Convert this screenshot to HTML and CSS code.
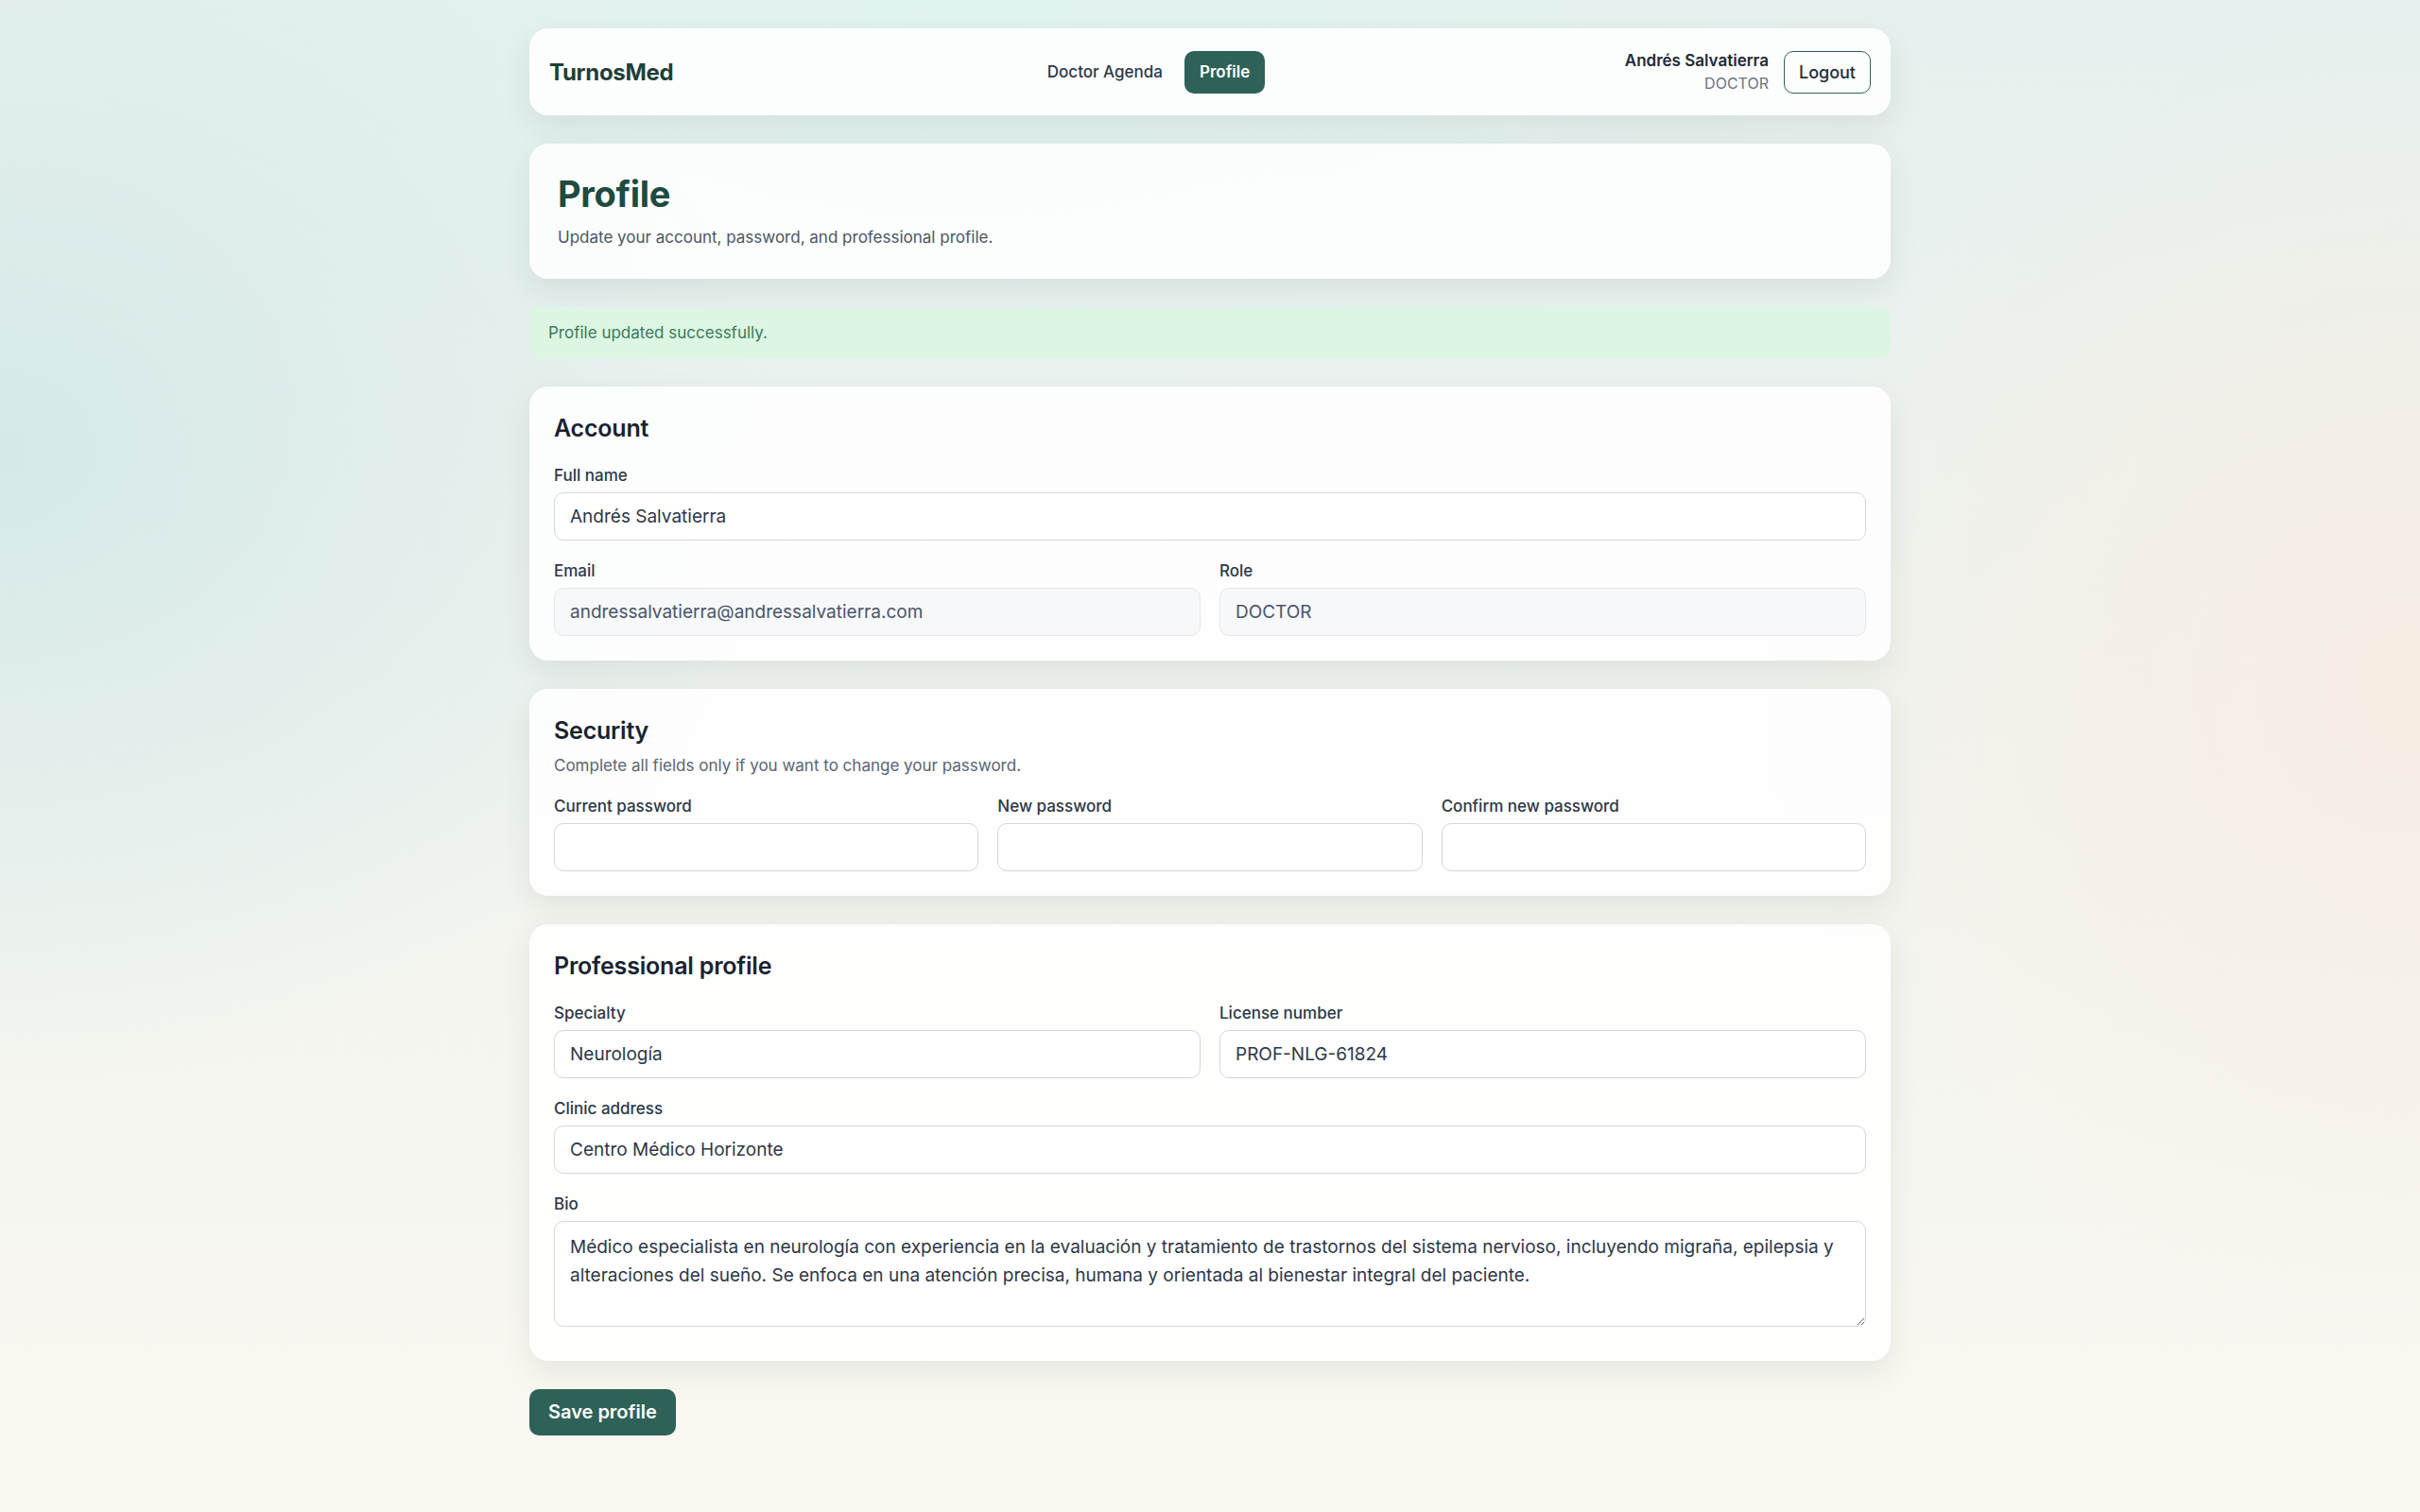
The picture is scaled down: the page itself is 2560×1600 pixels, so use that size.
FILE: index.html
```html
<!DOCTYPE html>
<html lang="en">

<head>
    <meta charset="UTF-8">
    <meta name="viewport" content="width=device-width, initial-scale=1.0">
    <title>TurnosMed - Profile</title>
    <link rel="stylesheet" href="styles.css">
</head>

<body>

    <div class="page">
        <!-- Top navigation -->
        <header class="navbar">
            <a href="#" class="brand">TurnosMed</a>
            <nav class="nav-links">
                <a href="#" class="nav-link">Doctor Agenda</a>
                <a href="#" class="nav-link active">Profile</a>
            </nav>
            <div class="user-area">
                <div class="user-info">
                    <span class="user-name">Andrés Salvatierra</span>
                    <span class="user-role">DOCTOR</span>
                </div>
                <button class="btn-outline">Logout</button>
            </div>
        </header>

        <!-- Page title -->
        <section class="card page-head">
            <h1>Profile</h1>
            <p>Update your account, password, and professional profile.</p>
        </section>

        <div class="alert-success">Profile updated successfully.</div>

        <form class="profile-form">
            <!-- Account -->
            <section class="card">
                <div class="card-head">
                    <h2>Account</h2>
                </div>
                <div class="field">
                    <label for="fullName">Full name</label>
                    <input type="text" id="fullName" value="Andrés Salvatierra">
                </div>
                <div class="grid-2">
                    <div class="field">
                        <label for="email">Email</label>
                        <input type="email" id="email" value="andressalvatierra@andressalvatierra.com" readonly>
                    </div>
                    <div class="field">
                        <label for="role">Role</label>
                        <input type="text" id="role" value="DOCTOR" readonly>
                    </div>
                </div>
            </section>

            <!-- Security -->
            <section class="card">
                <div class="card-head">
                    <h2>Security</h2>
                    <p>Complete all fields only if you want to change your password.</p>
                </div>
                <div class="grid-3">
                    <div class="field">
                        <label for="currentPassword">Current password</label>
                        <input type="password" id="currentPassword">
                    </div>
                    <div class="field">
                        <label for="newPassword">New password</label>
                        <input type="password" id="newPassword">
                    </div>
                    <div class="field">
                        <label for="confirmPassword">Confirm new password</label>
                        <input type="password" id="confirmPassword">
                    </div>
                </div>
            </section>

            <!-- Professional profile -->
            <section class="card">
                <div class="card-head">
                    <h2>Professional profile</h2>
                </div>
                <div class="grid-2">
                    <div class="field">
                        <label for="specialty">Specialty</label>
                        <input type="text" id="specialty" value="Neurología">
                    </div>
                    <div class="field">
                        <label for="license">License number</label>
                        <input type="text" id="license" value="PROF-NLG-61824">
                    </div>
                </div>
                <div class="field">
                    <label for="address">Clinic address</label>
                    <input type="text" id="address" value="Centro Médico Horizonte">
                </div>
                <div class="field">
                    <label for="bio">Bio</label>
                    <textarea id="bio" rows="3">Médico especialista en neurología con experiencia en la evaluación y tratamiento de trastornos del sistema nervioso, incluyendo migraña, epilepsia y alteraciones del sueño. Se enfoca en una atención precisa, humana y orientada al bienestar integral del paciente.</textarea>
                </div>
            </section>

            <div class="form-actions">
                <button type="submit" class="btn-primary">Save profile</button>
            </div>
        </form>
    </div>

</body>

</html>
```

FILE: styles.css
```css
/* Reset */
* {
    margin: 0;
    padding: 0;
    box-sizing: border-box;
}

body {
    font-family: 'Inter', 'Noto Sans', sans-serif;
    color: #1f2937;
    min-height: 100vh;
    background:
        radial-gradient(ellipse 1100px 900px at 0% 30%, rgba(212, 233, 233, 0.95), transparent 75%),
        radial-gradient(ellipse 1300px 600px at 40% 0%, rgba(224, 243, 241, 1), transparent 75%),
        radial-gradient(ellipse 1000px 1000px at 100% 45%, rgba(248, 237, 226, 0.9), transparent 70%),
        linear-gradient(180deg, #e6f0ee 0%, #f2f4ef 55%, #faf8f1 100%);
}

.page {
    width: 1440px;
    margin: 0 auto;
    padding: 30px 0 60px;
    display: flex;
    flex-direction: column;
    gap: 30px;
}

/* Cards */
.card {
    background: rgba(255, 255, 255, 0.86);
    border-radius: 20px;
    padding: 26px;
    box-shadow: 0 12px 32px rgba(40, 70, 60, 0.09);
}

/* Navbar */
.navbar {
    display: flex;
    justify-content: space-between;
    align-items: center;
    height: 92px;
    padding: 0 21px;
    background: rgba(255, 255, 255, 0.88);
    border-radius: 20px;
    box-shadow: 0 12px 32px rgba(40, 70, 60, 0.09);
}

.brand {
    font-size: 24px;
    font-weight: 700;
    color: #1f3f37;
    text-decoration: none;
    letter-spacing: -0.3px;
}

.nav-links {
    display: flex;
    align-items: center;
    gap: 8px;
}

.nav-link {
    font-size: 17px;
    font-weight: 500;
    line-height: 23px;
    color: #2d3748;
    text-decoration: none;
    padding: 11px 15px;
    border-radius: 10px;
}

.nav-link.active {
    background: #2e6157;
    color: #fff;
    font-weight: 600;
    padding: 11px 16px;
}

.user-area {
    display: flex;
    align-items: center;
    gap: 16px;
}

.user-info {
    display: flex;
    flex-direction: column;
    align-items: flex-end;
    line-height: 24px;
}

.user-name {
    font-size: 17px;
    font-weight: 600;
    color: #1f2937;
}

.user-role {
    font-size: 16px;
    color: #6b7280;
}

.btn-outline {
    font-family: inherit;
    font-size: 18px;
    font-weight: 500;
    line-height: 23px;
    color: #1f2d3a;
    background: transparent;
    border: 1.5px solid #2e6157;
    border-radius: 10px;
    padding: 10px 15px;
    cursor: pointer;
}

/* Page heading */
.page-head {
    padding: 31px 30px 32px;
}

.page-head h1 {
    font-size: 38px;
    line-height: 1.2;
    font-weight: 700;
    color: #1f4a40;
    letter-spacing: -0.3px;
    margin-bottom: 10px;
}

.page-head p {
    font-size: 17px;
    line-height: 24px;
    color: #4b5563;
}

/* Success message */
.alert-success {
    background: #dcf6e3;
    color: #3b7a57;
    font-size: 17px;
    line-height: 22px;
    padding: 16px 20px;
    border-radius: 10px;
}

/* Form */
.profile-form {
    display: flex;
    flex-direction: column;
    gap: 30px;
}

.card-head {
    margin-bottom: 22px;
}

.card-head h2 {
    font-size: 25px;
    line-height: 36px;
    font-weight: 600;
    color: #1a2230;
    letter-spacing: -0.2px;
}

.card-head p {
    margin-top: 8px;
    font-size: 17px;
    line-height: 22px;
    color: #5a6472;
}

.card > .field + .field,
.card > .grid-2 + .field,
.card > .field + .grid-2 {
    margin-top: 22px;
}

.grid-2 {
    display: grid;
    grid-template-columns: 1fr 1fr;
    gap: 20px;
}

.grid-3 {
    display: grid;
    grid-template-columns: 1fr 1fr 1fr;
    gap: 20px;
}

.field label {
    display: block;
    font-size: 17px;
    line-height: 20px;
    font-weight: 500;
    color: #2d3748;
    margin-bottom: 8px;
}

.field input,
.field textarea {
    display: block;
    width: 100%;
    font-family: inherit;
    font-size: 19px;
    color: #2d3748;
    background: #fff;
    border: 1px solid #d4d7dc;
    border-radius: 10px;
    outline: none;
}

.field input {
    height: 51px;
    padding: 0 16px;
}

.field input[readonly] {
    background: #f6f8fa;
    border-color: #e4e7eb;
    color: #4a5568;
}

.field textarea {
    height: 112px;
    padding: 12px 16px;
    line-height: 30px;
    resize: vertical;
    margin-bottom: 10px;
}

/* Save button */
.btn-primary {
    font-family: inherit;
    font-size: 20px;
    font-weight: 600;
    line-height: 25px;
    color: #fff;
    background: #2e6158;
    border: none;
    border-radius: 10px;
    padding: 12px 20px;
    cursor: pointer;
}
```
